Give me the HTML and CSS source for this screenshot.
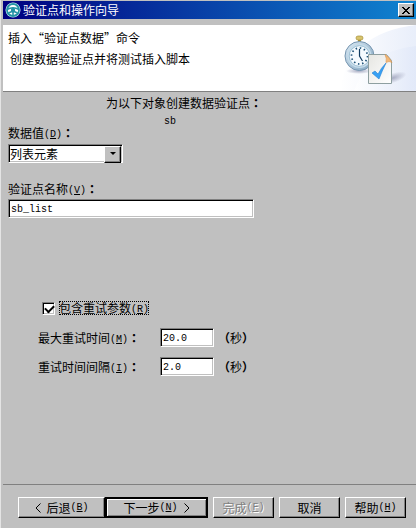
FILE: index.html
```
<!DOCTYPE html>
<html lang="zh-CN">
<head>
    <meta charset="UTF-8">
    <meta name="viewport" content="width=device-width, initial-scale=1.0">
    <title>验证点和操作向导</title>
    <link rel="stylesheet" href="styles.css">
</head>
<body>

<form class="wizard" id="wizardForm">
    <div class="title-bar">
        <svg class="app-icon" width="16" height="16" viewBox="0 0 16 16">
            <circle cx="8" cy="8" r="7.5" fill="#d8f4f6"/>
            <circle cx="8" cy="8" r="6" fill="#fff" stroke="#2493a6" stroke-width="1.8"/>
            <path d="M2 7.5Q8 4 14 7.5M8 9v5M8 9L3.5 11M8 9l4.5 2" fill="none" stroke="#2493a6" stroke-width="1.6"/>
            <circle cx="8" cy="8" r="2.2" fill="#2493a6"/>
        </svg>
        <h1>验证点和操作向导</h1>
        <button type="button" class="close" aria-label="关闭">
            <svg width="8" height="7" viewBox="0 0 8 7" shape-rendering="crispEdges">
                <path d="M0 0h2v1h1v1h2V1h1V0h2v1H7v1H6v1H5v1h1v1h1v1h1v1H6V6H5V5H3v1H2v1H0V6h1V5h1V4h1V3H2V2H1V1H0z" fill="#000"/>
            </svg>
        </button>
    </div>

    <div class="banner">
        <div class="banner-text">
            <h2>插入“验证点数据”命令</h2>
            <p>创建数据验证点并将测试插入脚本</p>
        </div>
        <svg class="banner-art" width="76" height="66" viewBox="0 0 76 66">
            <defs>
                <linearGradient id="sweep" x1="0" y1="0" x2="1" y2="0">
                    <stop offset="0" stop-color="#fff"/>
                    <stop offset="1" stop-color="#dfe7f8"/>
                </linearGradient>
                <linearGradient id="rim" x1="0" y1="0" x2="1" y2="1">
                    <stop offset="0" stop-color="#dceaf4"/>
                    <stop offset="1" stop-color="#7fa3bf"/>
                </linearGradient>
                <linearGradient id="paper" x1="0" y1="0" x2="1" y2="1">
                    <stop offset="0" stop-color="#e6e6e2"/>
                    <stop offset="1" stop-color="#fff"/>
                </linearGradient>
                <radialGradient id="shade">
                    <stop offset="0" stop-color="#a9adc4"/>
                    <stop offset="1" stop-color="#a9adc4" stop-opacity="0"/>
                </radialGradient>
            </defs>
            <path d="M0 66Q8 8 76 0V66z" fill="url(#sweep)" opacity=".7"/>
            <path d="M14 66Q28 26 76 21V66z" fill="url(#sweep)" opacity=".7"/>
            <ellipse cx="19" cy="46" rx="13" ry="3" fill="url(#shade)"/>
            <ellipse cx="53" cy="53" rx="14" ry="5" fill="url(#shade)" transform="rotate(-18 53 53)"/>
            <path d="M18 14h3v4h-3z" fill="#a98d2c"/>
            <rect x="16" y="11" width="7" height="4" rx="2" fill="#d8c46c" stroke="#a8913c" stroke-width=".7"/>
            <circle cx="19.5" cy="31" r="14.5" fill="url(#rim)" stroke="#7595b0"/>
            <circle cx="19.5" cy="31" r="12" fill="#c5dcea"/>
            <circle cx="19.5" cy="31" r="10.3" fill="#f5fbff" stroke="#91b5cc" stroke-width=".8"/>
            <circle cx="19.5" cy="31" r="8" fill="none" stroke="#1f5379" stroke-width="1.7" stroke-dasharray="1.5 2.69"/>
            <path d="M19.5 24v7l3 5" fill="none" stroke="#123d62" stroke-width="1.2"/>
            <path d="M28.5 29.5h18l5 6v23h-23z" fill="url(#paper)" stroke="#8e9fa0"/>
            <path d="M45 29.5q4 2 7 8-3-2-6 0 1-4-1-8z" fill="#f2b878" stroke="#d9944f" stroke-width=".6"/>
            <path d="M32 48l3-2 3 3q3-6 8-11-4 8-7 16z" fill="#37a1f4" stroke="#2580d4" stroke-width=".6"/>
        </svg>
    </div>

    <div class="content">
        <p class="target">为以下对象创建数据验证点<b lang="zh-TW">：</b></p>
        <p class="target-name">sb</p>

        <label for="dataValue">数据值<span class="key">(<u>D</u>)</span><b lang="zh-TW">：</b></label>
        <div class="select-box">
            <select id="dataValue">
                <option>列表元素</option>
            </select>
        </div>

        <label class="name-label" for="pointName">验证点名称<span class="key">(<u>V</u>)</span><b lang="zh-TW">：</b></label>
        <input type="text" class="point-name" id="pointName" value="sb_list">

        <div class="retry">
            <div class="retry-toggle">
                <input type="checkbox" id="retry" checked>
                <label for="retry">包含重试参数<span class="key">(<u>R</u>)</span></label>
            </div>
            <div class="retry-row">
                <label for="maxTime">最大重试时间<span class="key">(<u>M</u>)</span><b lang="zh-TW">：</b></label>
                <input type="text" id="maxTime" value="20.0">
                <span><b lang="zh-TW">（</b>秒<b lang="zh-TW">）</b></span>
            </div>
            <div class="retry-row">
                <label for="interval">重试时间间隔<span class="key">(<u>I</u>)</span><b lang="zh-TW">：</b></label>
                <input type="text" id="interval" value="2.0">
                <span><b lang="zh-TW">（</b>秒<b lang="zh-TW">）</b></span>
            </div>
        </div>
    </div>

    <div class="buttons">
        <button type="button" class="back"><svg width="6" height="10" viewBox="0 0 6 10"><path d="M5.500 .5L1 5l4.500 4.500" fill="none" stroke="#000"/></svg>后退<span class="key">(<u>B</u>)</span></button>
        <button type="submit" class="next">下一步<span class="key">(<u>N</u>)</span><svg width="6" height="10" viewBox="0 0 6 10"><path d="M.5 .5L5 5 .5 9.500" fill="none" stroke="#000"/></svg></button>
        <button type="button" disabled>完成<span class="key">(<u>F</u>)</span></button>
        <button type="button">取消</button>
        <button type="button">帮助<span class="key">(<u>H</u>)</span></button>
    </div>
</form>

</body>
</html>
```
FILE: styles.css
```
* {
    box-sizing: border-box;
}
body {
    margin: 0;
    background: #c0c0c0;
    color: #000;
    font: 12px/16px "Noto Sans CJK SC", sans-serif;
    text-spacing-trim: space-all;
}
h1, h2, p {
    margin: 0;
    font-size: 12px;
    font-weight: normal;
}
input, select, button {
    font: inherit;
    color: inherit;
    margin: 0;
    border-radius: 0;
}
b {
    font-family: "Noto Sans CJK TC", sans-serif;
    line-height: 1;
}
.key {
    font-family: "Liberation Mono", monospace;
    font-size: 10px;
    line-height: 1;
    vertical-align: 1px;
}
.wizard {
    display: flex;
    flex-direction: column;
    min-height: 100vh;
    padding: 1px 0 10px 2px;
    border-left: 1px solid #e4e4e4;
}

/* title bar */
.title-bar {
    display: flex;
    align-items: center;
    gap: 2px;
    height: 18px;
    padding: 0 2px;
    background: linear-gradient(to right, #000080, #1084d0);
}
.title-bar h1 {
    flex: 1;
    color: #fff;
}
.close {
    display: flex;
    align-items: center;
    justify-content: center;
    width: 16px;
    height: 14px;
    padding: 0;
    background: #c0c0c0;
    border: 1px solid;
    border-color: #fff #000 #000 #fff;
    box-shadow: inset -1px -1px #808080;
}

/* banner */
.banner {
    display: flex;
    justify-content: space-between;
    height: 67px;
    margin-top: 6px;
    background: #fff;
    border-bottom: 1px solid #808080;
}
.banner-text {
    padding: 5px;
}
.banner-text p {
    margin-top: 5px;
    padding-left: 2px;
}

/* fields */
.content {
    flex: 1;
    padding: 3px 5px;
}
.content label {
    display: block;
}
.target {
    padding-left: 98px;
}
.target-name {
    padding-left: 156px;
    font-family: "Liberation Mono", monospace;
    font-size: 10px;
    line-height: 22px;
    margin-bottom: -8px;
}
.content input[type="text"], .select-box {
    height: 19px;
    background: #fff;
    border: 1px solid;
    border-color: #808080 #fff #fff #808080;
    box-shadow: inset 1px 1px #000, inset -1px -1px #c0c0c0;
    outline: none;
}
.content input[type="text"] {
    padding: 3px 2px 1px;
    font-family: "Liberation Mono", monospace;
    font-size: 10px;
}
.select-box {
    position: relative;
    width: 115px;
    margin-top: 3px;
}
.select-box select {
    width: 100%;
    height: 17px;
    padding: 0 1px;
    line-height: 16px;
    appearance: none;
    background: none;
    border: none;
    outline: none;
}
.select-box::before {
    content: "";
    position: absolute;
    top: 1px;
    right: 1px;
    width: 15px;
    height: 15px;
    background: #c0c0c0;
    border: 1px solid;
    border-color: #fff #000 #000 #fff;
    box-shadow: inset -1px -1px #808080;
    pointer-events: none;
}
.select-box::after {
    content: "";
    position: absolute;
    top: 7px;
    right: 6px;
    border: 3px solid transparent;
    border-top-color: #000;
    border-bottom: none;
    pointer-events: none;
}
.content .name-label {
    margin-top: 18px;
}
.point-name {
    display: block;
    width: 246px;
    margin-top: 2px;
}
.retry {
    margin: 83px 0 0 30px;
}
.retry-toggle {
    display: flex;
    align-items: center;
    gap: 4px;
    padding-left: 4px;
    margin-bottom: 13px;
}
.retry-toggle label {
    line-height: 14px;
    outline: 1px dotted #000;
    outline-offset: -1px;
}
.retry-toggle input {
    appearance: none;
    width: 13px;
    height: 13px;
    background: #fff;
    border: 1px solid;
    border-color: #808080 #fff #fff #808080;
    box-shadow: inset 1px 1px #000, inset -1px -1px #c0c0c0;
}
.retry-toggle input:checked::after {
    content: "";
    display: block;
    width: 7px;
    height: 4px;
    margin: 2px;
    border: solid #000;
    border-width: 0 0 2px 2px;
    transform: rotate(-45deg);
}
.retry-row {
    display: flex;
    align-items: center;
    margin-bottom: 10px;
}
.retry-row label {
    width: 122px;
}
.retry-row input {
    width: 54px;
    margin-right: 4px;
}

/* buttons */
.buttons {
    display: flex;
    padding: 12px 10px 0 15px;
    border-top: 1px solid #808080;
}
.buttons button {
    display: flex;
    flex: 61 1 0;
    align-items: center;
    justify-content: center;
    height: 21px;
    margin-left: 5px;
    padding: 0;
    white-space: nowrap;
    background: #c0c0c0;
    border: 1px solid;
    border-color: #fff #000 #000 #fff;
    box-shadow: inset -1px -1px #808080;
}
.buttons .back {
    flex-grow: 88;
    gap: 6px;
    margin-left: 0;
}
.buttons .next {
    flex-grow: 102;
    gap: 6px;
    margin-left: 0;
    border: 2px solid #000;
    box-shadow: inset 1px 1px #fff, inset -1px -1px #808080;
}
.buttons .back .key, .buttons .next .key {
    margin-left: -6px;
}
.buttons button:disabled {
    color: #808080;
    text-shadow: 1px 1px #fff;
}
```
